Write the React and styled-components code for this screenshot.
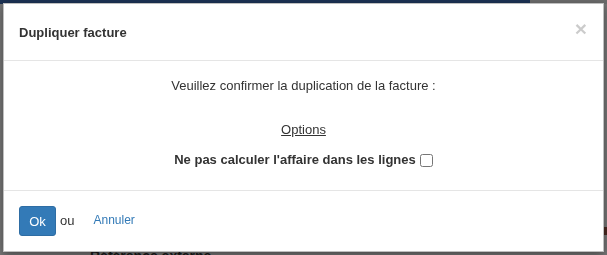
import React, { useState } from "react";
import styled, { createGlobalStyle } from "styled-components";

const GlobalStyle = createGlobalStyle`
  html, body {
    margin: 0;
    padding: 0;
    height: 100%;
  }
  body {
    font-family: "Liberation Sans", Arial, sans-serif;
    font-size: 13px;
    color: #333;
    background: #737373;
    overflow: hidden;
  }
`;

// page behind the backdrop (dimmed)
const Page = styled.div`
  height: 255px;
  display: flex;
  flex-direction: column;
`;

const Navbar = styled.div`
  height: 4px;
  display: flex;
  background: #1c3254;
`;

const NavSpacer = styled.div`
  flex: 1;
`;

const NavUser = styled.div`
  width: 77px;
  background: #6c6c6c;
`;

const PageBody = styled.div`
  flex: 1;
  display: flex;
  align-items: flex-end;
  justify-content: space-between;
  padding: 0 0 0 90px;
  background: #777;
`;

const PageLabel = styled.div`
  font-weight: bold;
  font-size: 14px;
  color: #1a1a1a;
  line-height: 14px;
  margin-bottom: -8px;
`;

const SideMark = styled.div`
  width: 3px;
  height: 8px;
  margin-bottom: 20px;
  background: #4a2a22;
`;

// modal
const Backdrop = styled.div`
  position: fixed;
  inset: 0;
  padding: 3px 3px 0 3px;
`;

const Dialog = styled.div`
  width: 601px;
  height: 249px;
  box-sizing: border-box;
  background: #fff;
  border: 1px solid rgba(0, 0, 0, 0.25);
  box-shadow: 0 3px 9px rgba(0, 0, 0, 0.4);
  display: flex;
  flex-direction: column;
`;

const Header = styled.div`
  flex-shrink: 0;
  display: flex;
  align-items: center;
  justify-content: space-between;
  padding: 15px;
  height: 26px;
  border-bottom: 1px solid #e5e5e5;
`;

const Title = styled.h4`
  margin: 0;
  font-size: 13px;
  font-weight: bold;
  color: #333;
`;

const Close = styled.button`
  border: 0;
  background: transparent;
  padding: 0;
  margin: -7px 1px 0 0;
  font-family: "Liberation Sans", Arial, sans-serif;
  font-size: 21px;
  font-weight: bold;
  line-height: 1;
  color: #000;
  opacity: 0.2;
  cursor: pointer;
`;

const Body = styled.div`
  flex: 1;
  padding: 15px 15px 20px;
  text-align: center;
  display: flex;
  flex-direction: column;
`;

const Line = styled.p`
  margin: 0 0 ${(p) => p.$gap || 0}px;
  line-height: 20px;
  font-weight: ${(p) => (p.$bold ? "bold" : "normal")};
  text-decoration: ${(p) => (p.$underline ? "underline" : "none")};
  display: flex;
  align-items: center;
  justify-content: center;
  gap: 4px;
`;

const Check = styled.input`
  width: 13px;
  height: 13px;
  margin: 0;
`;

const Footer = styled.div`
  flex-shrink: 0;
  display: flex;
  align-items: center;
  gap: 4px;
  padding: 15px;
  border-top: 1px solid #e5e5e5;
`;

const OkButton = styled.button`
  width: 37px;
  height: 30px;
  border: 1px solid #2e6da4;
  border-radius: 3px;
  background: #337ab7;
  color: #fff;
  font-family: "Liberation Sans", Arial, sans-serif;
  font-size: 13px;
  padding: 0;
  cursor: pointer;
`;

const Or = styled.span`
  margin-top: -2px;
`;

const CancelLink = styled.a`
  margin: -2px 0 0 15px;
  color: #337ab7;
  font-size: 12px;
  text-decoration: none;
  cursor: pointer;
`;

export default function App() {
  const [noCalc, setNoCalc] = useState(false);

  return (
    <>
      <GlobalStyle />
      <Page>
        <Navbar>
          <NavSpacer />
          <NavUser />
        </Navbar>
        <PageBody>
          <PageLabel>Référence externe</PageLabel>
          <SideMark />
        </PageBody>
      </Page>
      <Backdrop>
        <Dialog>
          <Header>
            <Title>Dupliquer facture</Title>
            <Close aria-label="Fermer">×</Close>
          </Header>
          <Body>
            <Line $gap={24}>Veuillez confirmer la duplication de la facture :</Line>
            <Line $gap={10} $underline>Options</Line>
            <Line $bold>
              Ne pas calculer l'affaire dans les lignes
              <Check
                type="checkbox"
                checked={noCalc}
                onChange={(e) => setNoCalc(e.target.checked)}
              />
            </Line>
          </Body>
          <Footer>
            <OkButton>Ok</OkButton>
            <Or>ou</Or>
            <CancelLink>Annuler</CancelLink>
          </Footer>
        </Dialog>
      </Backdrop>
    </>
  );
}
